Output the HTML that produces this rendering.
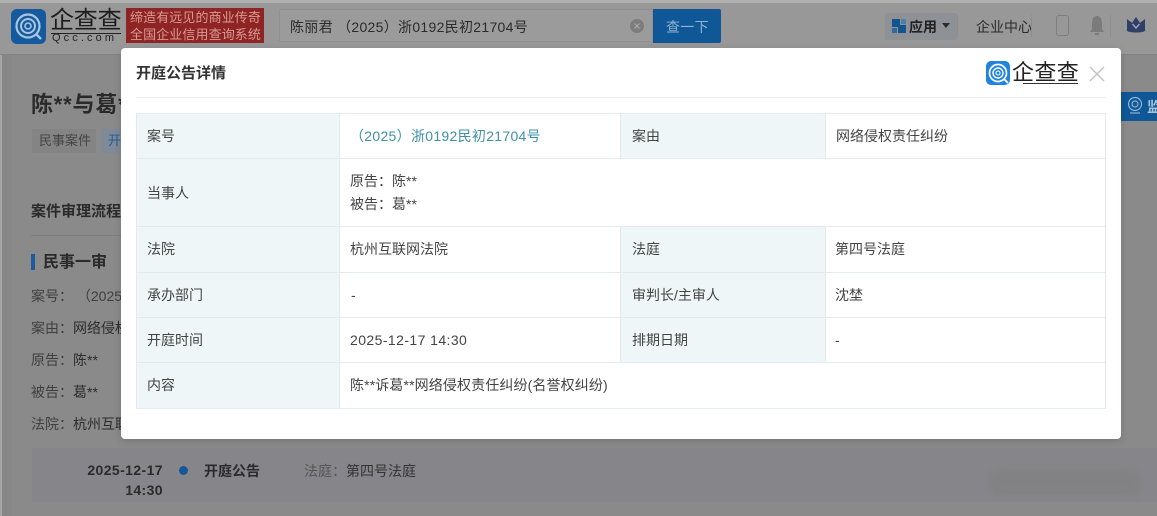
<!DOCTYPE html>
<html lang="zh"><head><meta charset="utf-8"><style>
html,body{margin:0;padding:0}
body{width:1157px;height:516px;position:relative;overflow:hidden;background:#8a8a8a;font-family:"Liberation Sans","Noto Sans CJK SC",sans-serif;font-size:14px;color:#333}
.a{position:absolute;white-space:nowrap;line-height:20px}
.r{position:absolute}
.bg{color:#2a2a2a}
.cell{position:absolute;background:#eef6f8}
.l{position:absolute;background:#e3ebee}
.t{position:absolute;white-space:nowrap;line-height:20px;color:#444}
.d{letter-spacing:.42px}
</style></head><body>
<div class="r" style="left:0;top:0;width:1157px;height:3px;background:#b0b0b0"></div>
<div class="r" style="left:0;top:3px;width:1157px;height:51px;background:#989898"></div>
<div class="r" style="left:0;top:54px;width:1157px;height:1px;background:#838383"></div>
<div class="r" style="left:0;top:55px;width:2px;height:461px;background:#a5a5a5"></div>
<div class="r" style="left:2px;top:55px;width:10px;height:461px;background:#878787"></div>

<svg class="r" style="left:11px;top:9px" width="35" height="35" viewBox="0 0 35 35"><rect width="35" height="35" rx="6" fill="#15599f"/><circle cx="17" cy="17" r="11.5" fill="none" stroke="#a9c6de" stroke-width="2.2"/><circle cx="17" cy="17" r="7" fill="none" stroke="#a9c6de" stroke-width="2"/><circle cx="17" cy="17" r="3" fill="none" stroke="#a9c6de" stroke-width="1.6"/><path d="M25 25l5 5" stroke="#a9c6de" stroke-width="2.4"/></svg>
<div class="a" style="left:50px;top:6px;font-size:24px;line-height:30px;color:#1c1c1c;letter-spacing:-.2px">企查查</div>
<div class="r" style="left:51px;top:33px;width:70px;height:1px;background:#222"></div>
<div class="a" style="left:52px;top:30px;font-size:11px;line-height:16px;color:#222;letter-spacing:3.1px">Qcc.com</div>
<div class="r" style="left:126px;top:8px;width:138px;height:35px;background:#8f2424"></div>
<div class="a" style="left:130px;top:9px;font-size:13px;line-height:17px;color:#d89a94;letter-spacing:.1px">缔造有远见的商业传奇<br>全国企业信用查询系统</div>

<div class="r" style="left:279px;top:9px;width:374px;height:33px;background:#9b9b9b;border:1px solid #8f8f8f;box-sizing:border-box;border-radius:2px 0 0 2px"></div>
<div class="a" style="left:290px;top:17px;color:#2b2b2b;letter-spacing:.3px">陈丽君 （2025）浙0192民初21704号</div>
<svg class="r" style="left:630px;top:19px" width="14" height="14" viewBox="0 0 14 14"><circle cx="7" cy="7" r="7" fill="#7d7d7d"/><path d="M4.5 4.5l5 5M9.5 4.5l-5 5" stroke="#a5a5a5" stroke-width="1.2"/></svg>
<div class="r" style="left:653px;top:9px;width:68px;height:34px;background:#0f5796;border-radius:0 2px 2px 0"></div>
<div class="a" style="left:666px;top:17px;color:#8fb3d0;letter-spacing:.3px">查一下</div>

<div class="r" style="left:885px;top:13px;width:72px;height:27px;background:#8e9196;border-radius:2px"></div>
<svg class="r" style="left:892px;top:19px" width="14" height="14" viewBox="0 0 14 14"><rect width="8" height="8" fill="#15558f"/><rect x="9" width="5" height="5" fill="#4f7fa8"/><rect y="9" width="5" height="5" fill="#2d6a9e"/><rect x="6" y="6" width="8" height="8" fill="#15558f"/></svg>
<div class="a" style="left:909px;top:17px;font-weight:bold;color:#222;">应用</div>
<svg class="r" style="left:941px;top:23px" width="10" height="6"><path d="M1 0h8L5 5z" fill="#2c2c2c"/></svg>
<div class="r" style="left:957px;top:15px;width:1px;height:22px;background:#8d8d8d"></div>
<div class="a" style="left:976px;top:17px;color:#2b2b2b">企业中心</div>
<div class="r" style="left:1031px;top:15px;width:1px;height:22px;background:#8d8d8d"></div>
<div class="r" style="left:1056px;top:15px;width:13px;height:21px;border:1px solid #7e7e7e;border-radius:3px;box-sizing:border-box"></div>
<svg class="r" style="left:1089px;top:15px" width="16" height="22" viewBox="0 0 16 22"><path d="M8 1c4 0 5 4 5 8v5l2 3H1l2-3V9c0-4 1-8 5-8z" fill="#7b7b7b"/><rect x="6" y="18" width="4" height="2" fill="#7b7b7b"/></svg>
<div class="r" style="left:1110px;top:15px;width:1px;height:22px;background:#8d8d8d"></div>
<svg class="r" style="left:1126px;top:16px" width="20" height="18" viewBox="0 0 20 18"><path d="M1 3l5 4 4-6 4 6 5-4v12c-3 2-15 2-18 0z" fill="#2f3f6a"/><path d="M6.5 8l3.5 4 3.500-4" fill="none" stroke="#a0a0a8" stroke-width="1.5"/></svg>

<div class="a bg" style="left:31px;top:90px;font-size:22px;line-height:30px;font-weight:bold;letter-spacing:.8px">陈**与葛**</div>
<div class="r" style="left:32px;top:129px;width:64px;height:24px;background:#848484;border-radius:2px"></div>
<div class="a" style="left:39px;top:131px;font-size:13px;color:#444">民事案件</div>
<div class="r" style="left:101px;top:129px;width:40px;height:24px;background:#7f8a98;border-radius:2px"></div>
<div class="a" style="left:108px;top:131px;font-size:13px;color:#245c94">开庭</div>
<div class="a bg" style="left:31px;top:202px;font-size:15px;font-weight:bold">案件审理流程</div>
<div class="r" style="left:31px;top:235px;width:100px;height:1px;background:#7d7d7d"></div>
<div class="r" style="left:31px;top:254px;width:4px;height:16px;background:#1c5c9c"></div>
<div class="a bg" style="left:43px;top:253px;font-size:16px;font-weight:bold">民事一审</div>
<div class="a" style="left:31px;top:286px;color:#3f3f3f">案号： （2025</div>
<div class="a" style="left:31px;top:318px;color:#3f3f3f">案由：<span style="color:#2c2c2c">网络侵权</span></div>
<div class="a" style="left:31px;top:350px;color:#3f3f3f">原告：<span style="color:#2c2c2c">陈**</span></div>
<div class="a" style="left:31px;top:382px;color:#3f3f3f">被告：<span style="color:#2c2c2c">葛**</span></div>
<div class="a" style="left:31px;top:414px;color:#3f3f3f">法院：<span style="color:#2c2c2c">杭州互联</span></div>

<div class="r" style="left:32px;top:448px;width:1125px;height:54px;background:#86868a"></div>
<div class="a bg" style="left:80px;top:460px;font-weight:bold;width:83px;text-align:right;letter-spacing:.4px">2025-12-17<br>14:30</div>
<div class="r" style="left:179px;top:466px;width:9px;height:9px;border-radius:50%;background:#15589a"></div>
<div class="a bg" style="left:204px;top:461px;font-weight:bold;font-size:14px">开庭公告</div>
<div class="a" style="left:304px;top:461px;color:#555">法庭：<span style="color:#333">第四号法庭</span></div>
<div class="r" style="left:990px;top:470px;width:150px;height:26px;background:#7f7f7f;opacity:.6;border-radius:8px;filter:blur(4px)"></div>
<div class="r" style="left:1121px;top:92px;width:36px;height:29px;background:#0f5796"></div>
<svg class="r" style="left:1127px;top:95px" width="16" height="22" viewBox="0 0 16 22"><circle cx="8" cy="9" r="6.5" fill="none" stroke="#8fb3d0" stroke-width="1.2"/><circle cx="8" cy="9" r="3" fill="none" stroke="#8fb3d0" stroke-width="1.2"/><path d="M3 18h10" stroke="#8fb3d0" stroke-width="1.2"/></svg>
<div class="a" style="left:1147px;top:97px;color:#a5c3da;font-weight:bold">监</div>

<div class="r" style="left:121px;top:48px;width:1000px;height:391px;background:#fff;border-radius:4px;box-shadow:0 2px 8px rgba(0,0,0,.15)"></div>
<div class="a" style="left:136px;top:64px;font-size:15px;font-weight:bold;color:#333">开庭公告详情</div>
<div class="r" style="left:136px;top:97px;width:970px;height:1px;background:#ebebeb"></div>
<svg class="r" style="left:986px;top:61px" width="24" height="24" viewBox="0 0 24 24"><rect width="24" height="24" rx="5" fill="#1f84dd"/><circle cx="12" cy="12" r="8.5" fill="none" stroke="#fff" stroke-width="1.7"/><circle cx="12" cy="12" r="5" fill="none" stroke="#fff" stroke-width="1.4"/><circle cx="12" cy="12" r="2" fill="none" stroke="#fff" stroke-width="1.1"/><path d="M18 18l4 4" stroke="#fff" stroke-width="1.8"/></svg>
<div class="a" style="left:1012px;top:58px;font-size:22px;line-height:29px;color:#222;letter-spacing:.4px">企查查</div>
<div class="r" style="left:1023px;top:83px;width:55px;height:1px;background:#333"></div>
<svg class="r" style="left:1089px;top:66px" width="16" height="16"><path d="M1 1l14 14M15 1L1 15" stroke="#c4c4c4" stroke-width="1.5" fill="none"/></svg>

<div class="cell" style="left:136px;top:113px;width:203px;height:295px"></div>
<div class="cell" style="left:620px;top:113px;width:205px;height:45px"></div>
<div class="cell" style="left:620px;top:226px;width:205px;height:136px"></div>
<div class="l" style="left:136px;top:113px;width:970px;height:1px"></div>
<div class="l" style="left:136px;top:158px;width:970px;height:1px"></div>
<div class="l" style="left:136px;top:226px;width:970px;height:1px"></div>
<div class="l" style="left:136px;top:272px;width:970px;height:1px"></div>
<div class="l" style="left:136px;top:317px;width:970px;height:1px"></div>
<div class="l" style="left:136px;top:362px;width:970px;height:1px"></div>
<div class="l" style="left:136px;top:408px;width:970px;height:1px"></div>
<div class="l" style="left:136px;top:113px;width:1px;height:296px"></div>
<div class="l" style="left:339px;top:113px;width:1px;height:296px"></div>
<div class="l" style="left:1105px;top:113px;width:1px;height:296px"></div>
<div class="l" style="left:620px;top:113px;width:1px;height:45px"></div>
<div class="l" style="left:825px;top:113px;width:1px;height:45px"></div>
<div class="l" style="left:620px;top:226px;width:1px;height:136px"></div>
<div class="l" style="left:825px;top:226px;width:1px;height:136px"></div>

<div class="t" style="left:147px;top:126px">案号</div>
<div class="t" style="left:147px;top:183px">当事人</div>
<div class="t" style="left:147px;top:239px">法院</div>
<div class="t" style="left:147px;top:285px">承办部门</div>
<div class="t" style="left:147px;top:330px">开庭时间</div>
<div class="t" style="left:147px;top:375px">内容</div>
<div class="t" style="left:632px;top:126px">案由</div>
<div class="t" style="left:632px;top:239px">法庭</div>
<div class="t" style="left:632px;top:285px">审判长/主审人</div>
<div class="t" style="left:632px;top:330px">排期日期</div>

<div class="t" style="left:350px;top:126px;color:#3f8fa8;letter-spacing:.3px">（2025）浙0192民初21704号</div>
<div class="t" style="left:836px;top:126px">网络侵权责任纠纷</div>
<div class="t" style="left:350px;top:171px">原告：陈**</div>
<div class="t" style="left:350px;top:194px">被告：葛**</div>
<div class="t" style="left:350px;top:239px">杭州互联网法院</div>
<div class="t" style="left:835px;top:239px">第四号法庭</div>
<div class="t" style="left:351px;top:285px">-</div>
<div class="t" style="left:835px;top:285px">沈埜</div>
<div class="t d" style="left:350px;top:330px">2025-12-17 14:30</div>
<div class="t" style="left:835px;top:330px">-</div>
<div class="t" style="left:350px;top:375px;letter-spacing:.12px">陈**诉葛**网络侵权责任纠纷(名誉权纠纷)</div>
</body></html>
